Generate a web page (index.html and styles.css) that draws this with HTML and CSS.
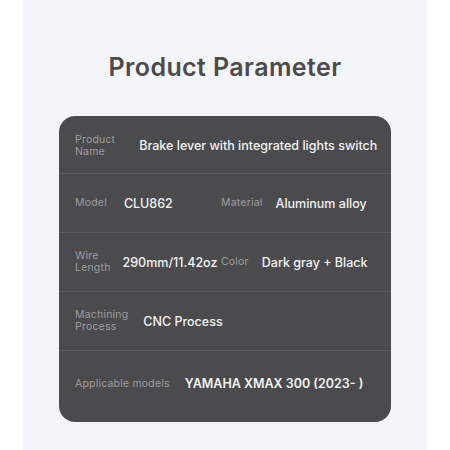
FILE: index.html
```html
<!DOCTYPE html>
<html>
<head>
<meta charset="utf-8">
<link rel="stylesheet" href="styles.css">
</head>
<body>
<div class="panel">
  <h1 class="title">Product Parameter</h1>
  <div class="card">
    <div class="row row-first">
      <div class="label">Product<br>Name</div>
      <div class="value">Brake lever with integrated lights switch</div>
    </div>
    <div class="row split">
      <div class="half">
        <div class="label">Model</div>
        <div class="value">CLU862</div>
      </div>
      <div class="half second">
        <div class="label">Material</div>
        <div class="value">Aluminum alloy</div>
      </div>
    </div>
    <div class="row split">
      <div class="half tight">
        <div class="label">Wire<br>Length</div>
        <div class="value">290mm/11.42oz</div>
      </div>
      <div class="half second">
        <div class="label">Color</div>
        <div class="value">Dark gray + Black</div>
      </div>
    </div>
    <div class="row">
      <div class="label">Machining<br>Process</div>
      <div class="value">CNC Process</div>
    </div>
    <div class="row row-last">
      <div class="label">Applicable models</div>
      <div class="value strong">YAMAHA XMAX 300 (2023- )</div>
    </div>
  </div>
</div>
</body>
</html>
```
FILE: styles.css
```css
html, body {
  margin: 0;
  padding: 0;
  background: #ffffff;
}
body {
  font-family: "Inter", "Noto Sans", sans-serif;
}
.panel {
  margin: 0 23px;
  height: 450px;
  background: #f4f5f9;
  padding-top: 50px;
  box-sizing: border-box;
}
.title {
  margin: 0;
  text-align: center;
  font-size: 25px;
  font-weight: 600;
  color: #4b4b4b;
  line-height: 34px;
  letter-spacing: 0.4px;
}
.card {
  margin: 32px 36px 0 36px;
  background: #4b4b4d;
  border-radius: 16px;
  display: flex;
  flex-direction: column;
}
.row {
  display: flex;
  align-items: center;
  gap: 15px;
  padding: 0 16px;
  height: 58px;
  border-bottom: 1px solid #5d5d5f;
}
.row.split {
  gap: 0;
}
.row-first {
  height: 58px;
  gap: 24px;
  padding-top: 2px;
  box-sizing: border-box;
}
.row-last {
  height: 71px;
  padding-bottom: 6px;
  box-sizing: border-box;
  border-bottom: none;
}
.half {
  display: flex;
  align-items: center;
  gap: 17px;
  width: 146px;
  flex: none;
}
.half.tight {
  gap: 12px;
}
.half.second {
  width: auto;
  gap: 13px;
}
.label {
  font-size: 10.5px;
  line-height: 12px;
  color: #9d9d9f;
  font-weight: 400;
  letter-spacing: 0.2px;
  white-space: nowrap;
}
.value {
  font-size: 12.5px;
  font-weight: 500;
  color: #f2f2f2;
  white-space: nowrap;
}
.value.strong {
  font-weight: 600;
}
```
